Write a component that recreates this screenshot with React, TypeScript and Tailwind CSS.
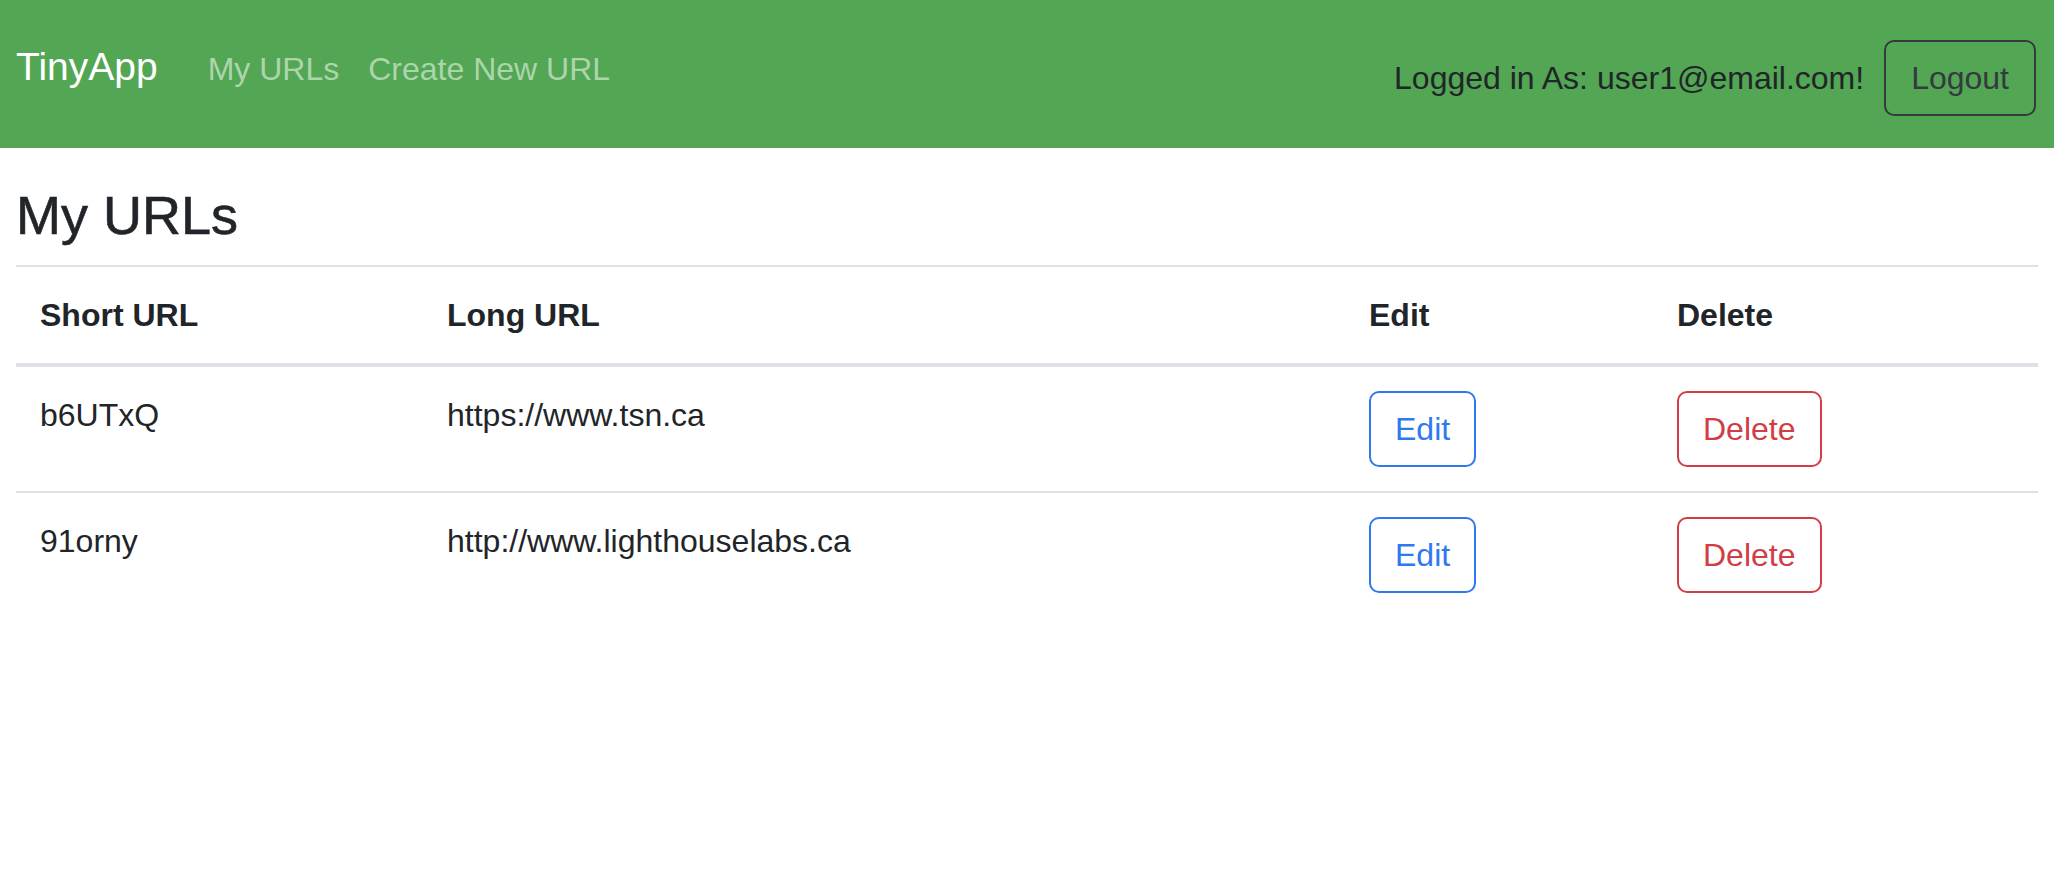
const urls = [
  { short: 'b6UTxQ', long: 'https://www.tsn.ca' },
  { short: '91orny', long: 'http://www.lighthouselabs.ca' },
];

function Navbar() {
  return (
    <nav className="flex h-[148px] items-start justify-between bg-[#53a653] pl-4 pr-[18px]">
      <div className="mt-[37px] flex items-baseline">
        <a className="text-[39px] leading-[60px] text-white">TinyApp</a>
        <a className="ml-[50px] text-[32px] leading-[48px] text-[#acd5ac]">My URLs</a>
        <a className="ml-[29px] text-[32px] leading-[48px] text-[#acd5ac]">Create New URL</a>
      </div>
      <div className="mt-[40px] flex items-center gap-5">
        <span className="text-[32px] leading-[48px] text-[#212529]">Logged in As: user1@email.com!</span>
        <button className="rounded-[10px] border-2 border-[#343a40] px-[25px] py-3 text-[32px] leading-[48px] text-[#343a40]">
          Logout
        </button>
      </div>
    </nav>
  );
}

export default function App() {
  return (
    <div className="min-h-screen bg-white font-['Liberation_Sans',Arial,sans-serif] text-[#212529]">
      <Navbar />
      <main className="px-4">
        <h1 className="mt-[34px] mb-4 text-[54px] leading-[67px] [-webkit-text-stroke:0.6px_#212529]">My URLs</h1>
        <table className="w-full table-fixed border-collapse text-left text-[32px] leading-[48px]">
          <colgroup>
            <col className="w-[407px]" />
            <col className="w-[922px]" />
            <col className="w-[308px]" />
            <col />
          </colgroup>
          <thead>
            <tr className="border-t-2 border-b-4 border-[#dee2e6]">
              <th className="p-6 font-bold">Short URL</th>
              <th className="p-6 font-bold">Long URL</th>
              <th className="p-6 font-bold">Edit</th>
              <th className="p-6 font-bold">Delete</th>
            </tr>
          </thead>
          <tbody>
            {urls.map((u) => (
              <tr key={u.short} className="border-t-2 border-[#dee2e6] align-top">
                <td className="p-6">{u.short}</td>
                <td className="p-6">{u.long}</td>
                <td className="p-6">
                  <button className="rounded-[10px] border-2 border-[#2f78ef] px-6 py-3 text-[32px] leading-[48px] text-[#2f78ef]">
                    Edit
                  </button>
                </td>
                <td className="p-6">
                  <button className="rounded-[10px] border-2 border-[#d23d45] px-6 py-3 text-[32px] leading-[48px] text-[#d23d45]">
                    Delete
                  </button>
                </td>
              </tr>
            ))}
          </tbody>
        </table>
      </main>
    </div>
  );
}
